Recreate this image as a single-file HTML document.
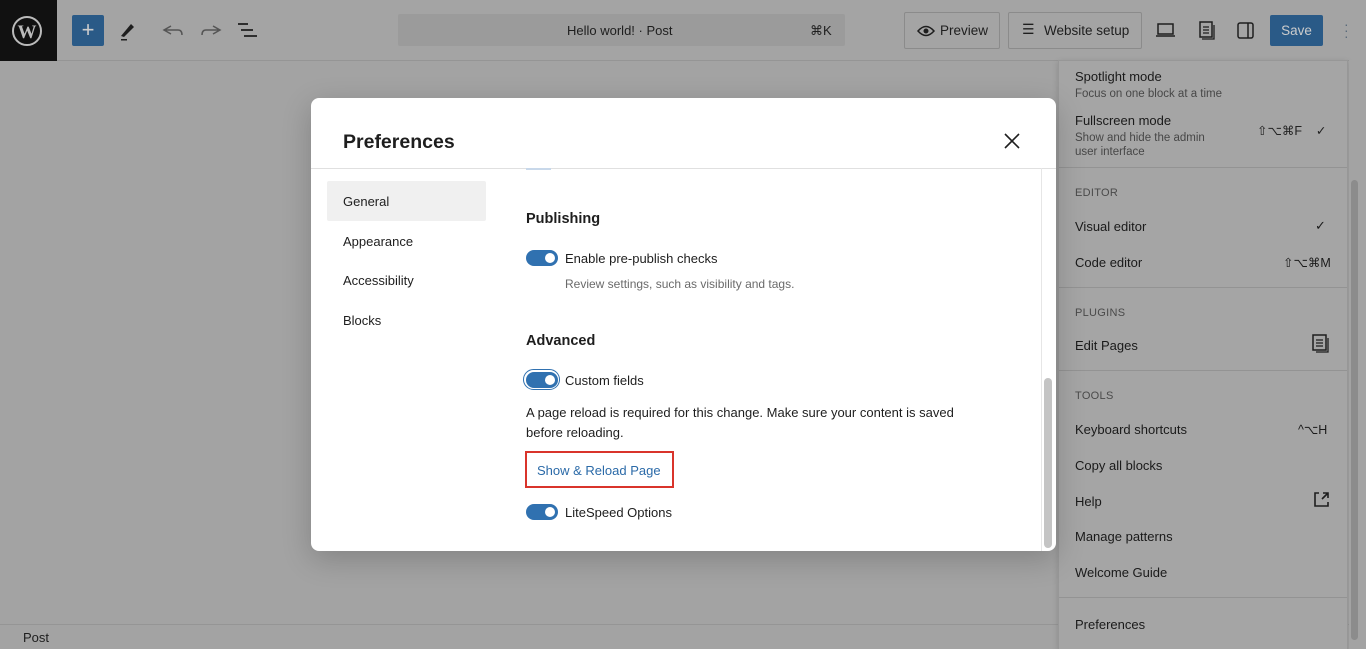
<!DOCTYPE html>
<html><head><style>
*{box-sizing:border-box;margin:0;padding:0}
html,body{width:1366px;height:649px;overflow:hidden}
body{background:#a3a3a3;font-family:"Liberation Sans",sans-serif;position:relative;color:#1e1e1e}
.hdr{position:absolute;left:0;top:0;width:1366px;height:61px;background:#a4a4a4;border-bottom:1px solid #959595}
.logo{position:absolute;left:0;top:0;width:57px;height:61px;background:#111}
.abs{position:absolute}
.menu{position:absolute;left:1058px;top:60px;width:290px;height:589px;background:#a5a5a5;border:1px solid #979797;border-bottom:none;box-shadow:0 2px 6px rgba(0,0,0,.15)}
.mi{position:absolute;left:16px;font-size:13px;color:#1a1a1a}
.ms{position:absolute;left:16px;font-size:11.5px;color:#474747;line-height:14px}
.mh{position:absolute;left:16px;font-size:11px;color:#4a4a4a;letter-spacing:.3px}
.sep{position:absolute;left:0;width:288px;height:1px;background:#939393}
.modal{position:absolute;left:311px;top:98px;width:745px;height:453px;background:#fff;border-radius:8px;box-shadow:0 8px 30px rgba(0,0,0,.2)}
.tog{position:absolute;width:32px;height:16px;border-radius:8px;background:#3071b0}
.tog:after{content:"";position:absolute;right:3px;top:3px;width:10px;height:10px;border-radius:50%;background:#fff}
.t{position:absolute;font-size:13px;color:#1e1e1e}
</style></head><body>
<div class="hdr"></div>
<div class="logo"><svg width="57" height="61"><circle cx="27" cy="31" r="14" fill="none" stroke="#bbb" stroke-width="2"/><text x="27" y="38" text-anchor="middle" font-family="Liberation Serif" font-weight="bold" font-size="19" fill="#bbb">W</text></svg></div>
<div class="abs" style="left:72px;top:15px;width:32px;height:31px;background:#2a5a87;border-radius:2px;color:#ccc;font-size:22px;text-align:center;line-height:30px">+</div>
<svg class="abs" style="left:115px;top:18px" width="150" height="26"><path d="M6 18 L16 6 L19 9 L9 19Z" fill="#1e1e1e"/><rect x="6" y="21" width="6" height="1.5" fill="#1e1e1e"/><path d="M56 8 L49 12 L56 16 M49 12 H63 Q67 12 67 17" fill="none" stroke="#555" stroke-width="1.5"/><path d="M98 8 L105 12 L98 16 M105 12 H91 Q87 12 87 17" fill="none" stroke="#555" stroke-width="1.5"/><path d="M123 6 H133 M126 12 H138 M129 18 H142" stroke="#1e1e1e" stroke-width="1.8"/></svg>
<div class="abs" style="left:398px;top:14px;width:447px;height:32px;background:#9b9b9b;border-radius:2px"></div>
<div class="abs" style="left:567px;top:23px;font-size:13px;color:#1e1e1e">Hello world! · Post</div>
<div class="abs" style="left:810px;top:23px;font-size:13px;color:#1e1e1e">⌘K</div>
<div class="abs" style="left:904px;top:12px;width:96px;height:37px;border:1px solid #8b8b8b;border-radius:2px"></div>
<svg class="abs" style="left:917px;top:24px" width="18" height="14"><path d="M1 7 Q9 -2 17 7 Q9 16 1 7Z" fill="none" stroke="#1e1e1e" stroke-width="1.5"/><circle cx="9" cy="7" r="2.5" fill="#1e1e1e"/></svg>
<div class="abs" style="left:940px;top:23px;font-size:13.5px">Preview</div>
<div class="abs" style="left:1008px;top:12px;width:134px;height:37px;border:1px solid #8b8b8b;border-radius:2px"></div>
<div class="abs" style="left:1022px;top:21px;font-size:14px">☰</div>
<div class="abs" style="left:1044px;top:23px;font-size:13.5px">Website setup</div>
<svg class="abs" style="left:1155px;top:20px" width="105" height="22"><rect x="3" y="4" width="15" height="10" fill="none" stroke="#1e1e1e" stroke-width="1.5"/><path d="M1 16 H20" stroke="#1e1e1e" stroke-width="1.5"/><rect x="45" y="2" width="12" height="15" fill="none" stroke="#1e1e1e" stroke-width="1.5"/><path d="M48 7 H54 M48 10 H54 M48 13 H54 M59 5 V19 H47" fill="none" stroke="#1e1e1e" stroke-width="1.3"/><rect x="83" y="3" width="15" height="15" rx="2" fill="none" stroke="#1e1e1e" stroke-width="1.5"/><path d="M93 3 V18" stroke="#1e1e1e" stroke-width="1.5"/></svg>
<div class="abs" style="left:1270px;top:15px;width:53px;height:31px;background:#2a5a87;border-radius:2px;color:#ccc;font-size:13.5px;text-align:center;line-height:31px">Save</div>
<div class="abs" style="left:1344px;top:21px;color:#5a6a7a;font-size:14px;line-height:6px">·<br>·<br>·</div>

<div class="abs" style="left:0;top:624px;width:1366px;height:1px;background:#959595"></div>
<div class="abs" style="left:23px;top:630px;font-size:13px">Post</div>

<div class="menu">
<div class="mi" style="top:8px">Spotlight mode</div>
<div class="ms" style="top:26px">Focus on one block at a time</div>
<div class="mi" style="top:52px">Fullscreen mode</div>
<div class="ms" style="top:70px">Show and hide the admin<br>user interface</div>
<div class="ms" style="top:63px;left:198px;font-size:12.5px;color:#222">⇧⌥⌘F&nbsp;&nbsp;&nbsp;&nbsp;✓</div>
<div class="sep" style="top:106px"></div>
<div class="mh" style="top:126px">EDITOR</div>
<div class="mi" style="top:158px">Visual editor</div>
<div class="mi" style="top:157px;left:256px">✓</div>
<div class="mi" style="top:194px">Code editor</div>
<div class="mi" style="top:194px;left:224px;font-size:12.5px">⇧⌥⌘M</div>
<div class="sep" style="top:226px"></div>
<div class="mh" style="top:246px">PLUGINS</div>
<div class="mi" style="top:277px">Edit Pages</div>
<svg class="abs" style="left:252px;top:272px" width="22" height="22"><rect x="2" y="2" width="13" height="15" fill="none" stroke="#1e1e1e" stroke-width="1.5"/><path d="M5 7 H12 M5 10 H12 M5 13 H12 M17 5 V19 H5" fill="none" stroke="#1e1e1e" stroke-width="1.3"/></svg>
<div class="sep" style="top:309px"></div>
<div class="mh" style="top:329px">TOOLS</div>
<div class="mi" style="top:361px">Keyboard shortcuts</div>
<div class="mi" style="top:361px;left:239px;font-size:12.5px">^⌥H</div>
<div class="mi" style="top:397px">Copy all blocks</div>
<div class="mi" style="top:433px">Help</div>
<svg class="abs" style="left:253px;top:429px" width="20" height="20"><path d="M7 3 H3 V16 H16 V12 M10 9 L16 3 M11 3 H16 V8" fill="none" stroke="#1e1e1e" stroke-width="1.6"/></svg>
<div class="mi" style="top:468px">Manage patterns</div>
<div class="mi" style="top:504px">Welcome Guide</div>
<div class="sep" style="top:536px"></div>
<div class="mi" style="top:556px">Preferences</div>
</div>
<div class="abs" style="left:1349px;top:60px;width:17px;height:589px;background:#a3a3a3"></div>
<div class="abs" style="left:1351px;top:180px;width:7px;height:460px;background:#8c8c8c;border-radius:4px"></div>

<div class="modal">
<div class="t" style="left:32px;top:33px;font-size:19.5px;font-weight:bold">Preferences</div>
<svg class="abs" style="left:692px;top:34px" width="18" height="18"><path d="M2 2 L16 16 M16 2 L2 16" stroke="#1e1e1e" stroke-width="1.6"/></svg>
<div class="abs" style="left:0;top:70px;width:745px;height:1px;background:#e0e0e0"></div>
<div class="abs" style="left:16px;top:83px;width:159px;height:40px;background:#f0f0f0;border-radius:2px"></div>
<div class="t" style="left:32px;top:96px">General</div>
<div class="t" style="left:32px;top:136px">Appearance</div>
<div class="t" style="left:32px;top:175px">Accessibility</div>
<div class="t" style="left:32px;top:215px">Blocks</div>
<div class="abs" style="left:215px;top:70px;width:25px;height:2px;background:#c8d8ea"></div>
<div class="t" style="left:215px;top:113px;font-size:14.5px;font-weight:bold">Publishing</div>
<div class="tog" style="left:215px;top:152px"></div>
<div class="t" style="left:254px;top:153px">Enable pre-publish checks</div>
<div class="t" style="left:254px;top:179px;font-size:12px;color:#6a6a6a">Review settings, such as visibility and tags.</div>
<div class="t" style="left:215px;top:235px;font-size:14.5px;font-weight:bold">Advanced</div>
<div class="abs" style="left:212px;top:271px;width:37px;height:21px;border:1.5px solid #3071b0;border-radius:11px"></div>
<div class="tog" style="left:215px;top:274px"></div>
<div class="t" style="left:254px;top:275px">Custom fields</div>
<div class="t" style="left:215px;top:305px;line-height:19.5px">A page reload is required for this change. Make sure your content is saved<br>before reloading.</div>
<div class="abs" style="left:214px;top:353px;width:149px;height:37px;border:2px solid #d9342b"></div>
<div class="t" style="left:226px;top:365px;color:#2b6aa8">Show &amp; Reload Page</div>
<div class="tog" style="left:215px;top:406px"></div>
<div class="t" style="left:254px;top:407px">LiteSpeed Options</div>
<div class="abs" style="left:730px;top:70px;width:15px;height:383px;border-left:1px solid #e6e6e6"></div>
<div class="abs" style="left:733px;top:280px;width:8px;height:170px;background:#c4c4c4;border-radius:4px"></div>
</div>
</body></html>
